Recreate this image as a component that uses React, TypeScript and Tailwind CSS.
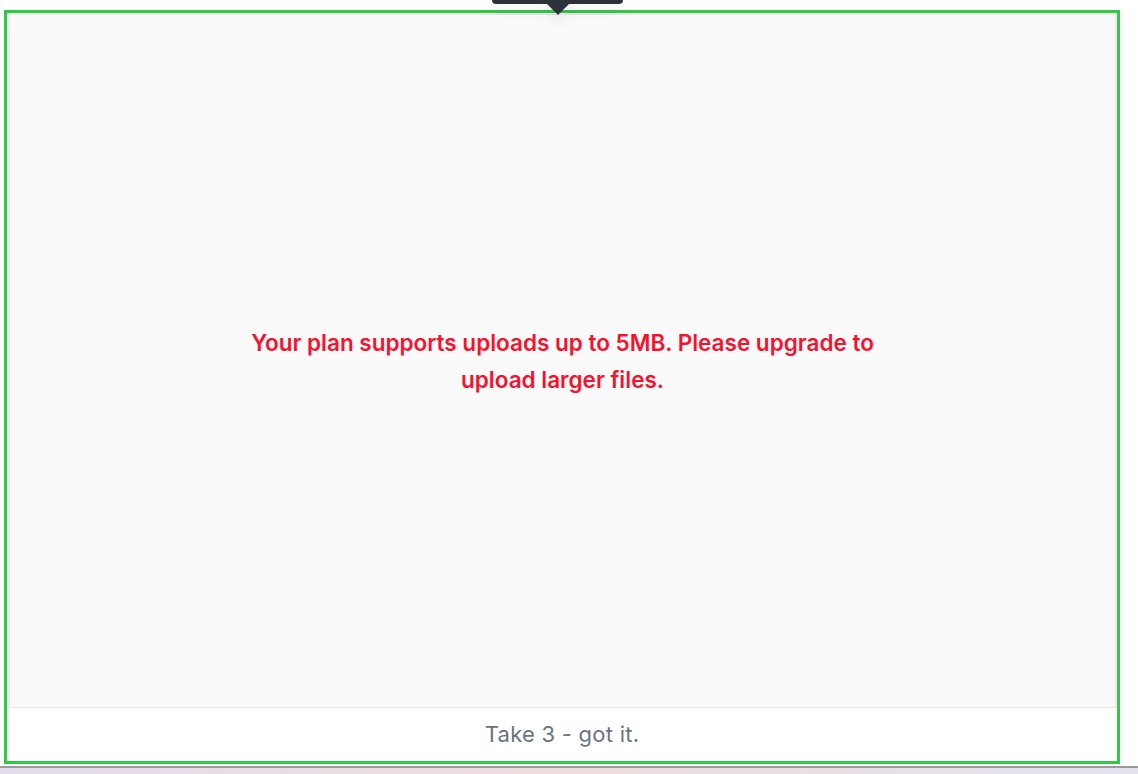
import React from 'react'

function Tooltip() {
    return (
        <div className="absolute left-[492px] top-0 z-10 flex flex-col items-center drop-shadow-[0_4px_8px_rgba(0,0,0,0.12)]">
            <div className="w-[131px] h-[4px] bg-[#2d3139] rounded-b-[5px]" />
            <div className="w-0 h-0 border-l-[11px] border-r-[11px] border-t-[11px] border-l-transparent border-r-transparent border-t-[#2d3139]" />
        </div>
    )
}

export default function App() {
    return (
        <div className="relative w-[1138px] h-[774px] bg-white overflow-hidden font-['Inter','Noto_Sans',sans-serif]">
            <Tooltip />

            <div className="pt-[10px] pl-[4px]">
                <div className="w-[1116px] h-[754px] border-[3px] border-[#2ecc40] flex flex-col">
                    <div className="flex-1 ml-[2px] mr-[1px] mt-[1px] bg-[#fafafa] border border-[#e8e8e8] flex items-center justify-center">
                        <p className="max-w-[660px] text-center text-[22.5px] leading-[37px] font-semibold text-[#f5122f]">
                            Your plan supports uploads up to 5MB. Please upgrade to upload larger files.
                        </p>
                    </div>
                    <div className="h-[53px] flex items-center justify-center">
                        <span className="text-[22px] text-[#6b7280] tracking-[0.25px]">Take 3 - got it.</span>
                    </div>
                </div>
            </div>

            <div className="h-[2px] bg-white" />
            <div className="h-[2px] bg-[#9a9a9a]" />
            <div className="h-[10px] bg-gradient-to-r from-[#e4dcec] via-[#eddcdd] to-[#e2e2ee]" />
        </div>
    )
}
